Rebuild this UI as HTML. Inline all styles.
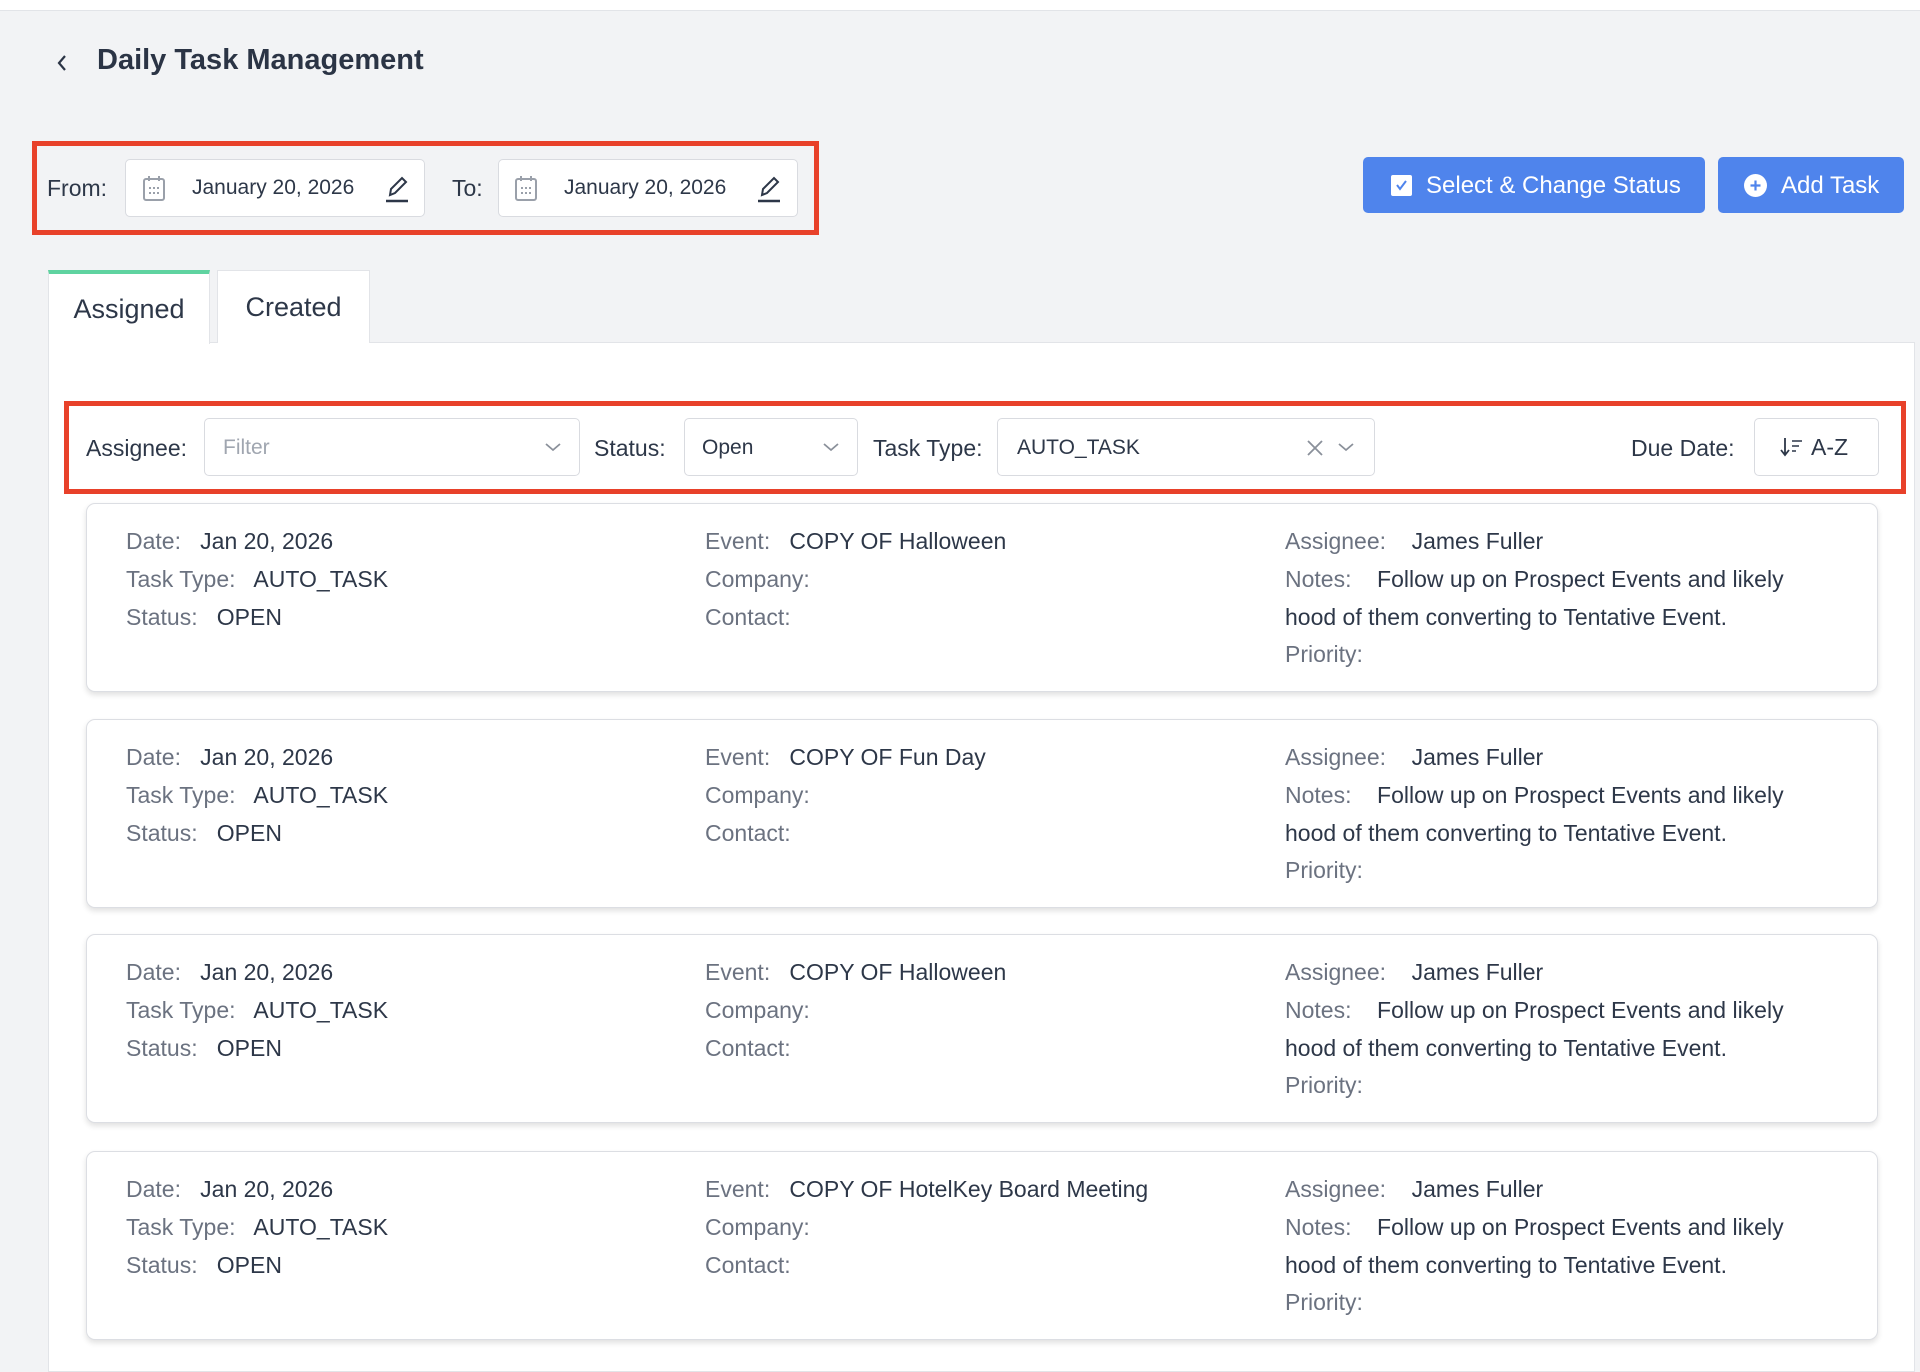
<!DOCTYPE html>
<html><head><meta charset="utf-8"><style>
*{box-sizing:border-box;margin:0;padding:0}
body{width:1920px;height:1360px;background:#f2f3f5;font-family:"Liberation Sans",sans-serif;color:#2d3748;position:relative;overflow:hidden}
.a{position:absolute}
.top{left:0;top:0;width:1920px;height:11px;background:#fff;border-bottom:1px solid #e2e4e8}
.title{left:97px;top:40px;font-size:29px;font-weight:bold;color:#2b3445;line-height:40px}
.red{border:5px solid #e8412a}
.lbl{font-size:23px;color:#2d3748;line-height:30px}
.box{background:#fff;border:1px solid #d9dbe0;border-radius:5px}
.btn{background:#4f84ec;border-radius:5px;color:#fff;font-size:24px;line-height:56px}
.card{left:86px;width:1792px;height:189px;background:#fff;border:1px solid #dcdee3;border-radius:9px;box-shadow:0 3px 6px rgba(0,0,0,.12)}
.row{position:absolute;font-size:23px;line-height:30px;white-space:nowrap}
.row .k{color:#6b7280}
.tab{top:270px;height:73px;background:#fff;border:1px solid #e2e4e8;border-bottom:none;font-size:27px;line-height:73px;text-align:center;color:#2d3748}
</style></head><body>
<div class="a top"></div>
<svg class="a" style="left:54px;top:52px" width="16" height="22" viewBox="0 0 16 22"><path d="M11 4 L5 11 L11 18" fill="none" stroke="#2b3445" stroke-width="2.2"/></svg>
<div class="a title">Daily Task Management</div>

<div class="a red" style="left:32px;top:141px;width:787px;height:94px"></div>
<div class="a lbl" style="left:47px;top:173px">From:</div>
<div class="a box" style="left:125px;top:159px;width:300px;height:58px"></div>
<svg class="a" style="left:142px;top:174px" width="24" height="28" viewBox="0 0 24 28"><rect x="2" y="5" width="20" height="21" rx="2" fill="none" stroke="#9aa0aa" stroke-width="2"/><line x1="7" y1="2" x2="7" y2="7" stroke="#9aa0aa" stroke-width="2"/><line x1="17" y1="2" x2="17" y2="7" stroke="#9aa0aa" stroke-width="2"/><g fill="#9aa0aa"><rect x="7" y="13" width="2" height="2"/><rect x="11" y="13" width="2" height="2"/><rect x="15" y="13" width="2" height="2"/><rect x="7" y="18" width="2" height="2"/><rect x="11" y="18" width="2" height="2"/><rect x="15" y="18" width="2" height="2"/></g></svg>
<div class="a" style="left:192px;top:173px;font-size:21px;line-height:30px">January 20, 2026</div>
<svg class="a" style="left:383px;top:174px" width="28" height="30" viewBox="0 0 28 30"><path d="M7 21 L8 15 L19 4 L23 8 L12 19 Z" fill="none" stroke="#2d3748" stroke-width="2"/><line x1="3" y1="27" x2="25" y2="27" stroke="#2d3748" stroke-width="2.4"/></svg>
<div class="a lbl" style="left:452px;top:173px">To:</div>
<div class="a box" style="left:498px;top:159px;width:300px;height:58px"></div>
<svg class="a" style="left:514px;top:174px" width="24" height="28" viewBox="0 0 24 28"><rect x="2" y="5" width="20" height="21" rx="2" fill="none" stroke="#9aa0aa" stroke-width="2"/><line x1="7" y1="2" x2="7" y2="7" stroke="#9aa0aa" stroke-width="2"/><line x1="17" y1="2" x2="17" y2="7" stroke="#9aa0aa" stroke-width="2"/><g fill="#9aa0aa"><rect x="7" y="13" width="2" height="2"/><rect x="11" y="13" width="2" height="2"/><rect x="15" y="13" width="2" height="2"/><rect x="7" y="18" width="2" height="2"/><rect x="11" y="18" width="2" height="2"/><rect x="15" y="18" width="2" height="2"/></g></svg>
<div class="a" style="left:564px;top:173px;font-size:21px;line-height:30px">January 20, 2026</div>
<svg class="a" style="left:755px;top:174px" width="28" height="30" viewBox="0 0 28 30"><path d="M7 21 L8 15 L19 4 L23 8 L12 19 Z" fill="none" stroke="#2d3748" stroke-width="2"/><line x1="3" y1="27" x2="25" y2="27" stroke="#2d3748" stroke-width="2.4"/></svg>

<div class="a btn" style="left:1363px;top:157px;width:342px;height:56px"></div>
<svg class="a" style="left:1391px;top:175px" width="21" height="21" viewBox="0 0 21 21"><rect width="21" height="21" rx="2" fill="#fff"/><path d="M6 10 L9 14 L15 6" fill="none" stroke="#4f84ec" stroke-width="2"/></svg>
<div class="a btn" style="left:1426px;top:158px;background:none">Select &amp; Change Status</div>
<div class="a btn" style="left:1718px;top:157px;width:186px;height:56px"></div>
<svg class="a" style="left:1744px;top:174px" width="23" height="23" viewBox="0 0 23 23"><circle cx="11.5" cy="11.5" r="11.5" fill="#fff"/><path d="M11.5 6.5v10M6.5 11.5h10" stroke="#4f84ec" stroke-width="2.2"/></svg>
<div class="a btn" style="left:1781px;top:158px;background:none">Add Task</div>

<div class="a" style="left:48px;top:342px;width:1867px;height:1030px;background:#fff;border:1px solid #e2e4e8"></div>
<div class="a tab" style="left:48px;width:162px;border-top:4px solid #5fd3a0;line-height:70px;height:74px">Assigned</div>
<div class="a tab" style="left:217px;width:153px;background:#fff">Created</div>

<div class="a red" style="left:64px;top:401px;width:1842px;height:93px"></div>
<div class="a lbl" style="left:86px;top:433px">Assignee:</div>
<div class="a box" style="left:204px;top:418px;width:376px;height:58px"></div>
<div class="a" style="left:223px;top:433px;font-size:21px;line-height:30px;color:#a0a6b0">Filter</div>
<svg class="a" style="left:544px;top:440px" width="18" height="14" viewBox="0 0 18 14"><path d="M2 4 L9 10 L16 4" fill="none" stroke="#8a909a" stroke-width="1.8"/></svg>
<div class="a lbl" style="left:594px;top:433px">Status:</div>
<div class="a box" style="left:684px;top:418px;width:174px;height:58px"></div>
<div class="a" style="left:702px;top:433px;font-size:21px;line-height:30px">Open</div>
<svg class="a" style="left:822px;top:440px" width="18" height="14" viewBox="0 0 18 14"><path d="M2 4 L9 10 L16 4" fill="none" stroke="#8a909a" stroke-width="1.8"/></svg>
<div class="a lbl" style="left:873px;top:433px">Task Type:</div>
<div class="a box" style="left:997px;top:418px;width:378px;height:58px"></div>
<div class="a" style="left:1017px;top:433px;font-size:21px;line-height:30px">AUTO_TASK</div>
<svg class="a" style="left:1305px;top:438px" width="20" height="20" viewBox="0 0 20 20"><path d="M3 3 L17 17 M17 3 L3 17" stroke="#8a909a" stroke-width="1.8"/></svg>
<svg class="a" style="left:1337px;top:440px" width="18" height="14" viewBox="0 0 18 14"><path d="M2 4 L9 10 L16 4" fill="none" stroke="#8a909a" stroke-width="1.8"/></svg>
<div class="a lbl" style="left:1631px;top:433px">Due Date:</div>
<div class="a box" style="left:1754px;top:418px;width:125px;height:58px"></div>
<svg class="a" style="left:1780px;top:436px" width="24" height="22" viewBox="0 0 24 22"><path d="M5 2 V18 M1 14 L5 19 L9 14" fill="none" stroke="#2d3748" stroke-width="1.8"/><path d="M12 5h10M12 10h7M12 15h4" stroke="#2d3748" stroke-width="1.6"/></svg>
<div class="a" style="left:1811px;top:432px;font-size:23px;line-height:30px">A-Z</div>

<div class="a card" style="top:503px">
<div class="row" style="left:39px;top:22px"><span class="k">Date:</span>&nbsp;&nbsp; Jan 20, 2026</div>
<div class="row" style="left:39px;top:60px"><span class="k">Task Type:</span>&nbsp;&nbsp; AUTO_TASK</div>
<div class="row" style="left:39px;top:98px"><span class="k">Status:</span>&nbsp;&nbsp; OPEN</div>
<div class="row" style="left:618px;top:22px"><span class="k">Event:</span>&nbsp;&nbsp; COPY OF Halloween</div>
<div class="row" style="left:618px;top:60px"><span class="k">Company:</span></div>
<div class="row" style="left:618px;top:98px"><span class="k">Contact:</span></div>
<div class="row" style="left:1198px;top:22px"><span class="k">Assignee:</span>&nbsp;&nbsp;&nbsp; James Fuller</div>
<div class="row" style="left:1198px;top:60px"><span class="k">Notes:</span>&nbsp;&nbsp;&nbsp; Follow up on Prospect Events and likely</div>
<div class="row" style="left:1198px;top:98px">hood of them converting to Tentative Event.</div>
<div class="row" style="left:1198px;top:135px"><span class="k">Priority:</span></div>
</div>
<div class="a card" style="top:719px">
<div class="row" style="left:39px;top:22px"><span class="k">Date:</span>&nbsp;&nbsp; Jan 20, 2026</div>
<div class="row" style="left:39px;top:60px"><span class="k">Task Type:</span>&nbsp;&nbsp; AUTO_TASK</div>
<div class="row" style="left:39px;top:98px"><span class="k">Status:</span>&nbsp;&nbsp; OPEN</div>
<div class="row" style="left:618px;top:22px"><span class="k">Event:</span>&nbsp;&nbsp; COPY OF Fun Day</div>
<div class="row" style="left:618px;top:60px"><span class="k">Company:</span></div>
<div class="row" style="left:618px;top:98px"><span class="k">Contact:</span></div>
<div class="row" style="left:1198px;top:22px"><span class="k">Assignee:</span>&nbsp;&nbsp;&nbsp; James Fuller</div>
<div class="row" style="left:1198px;top:60px"><span class="k">Notes:</span>&nbsp;&nbsp;&nbsp; Follow up on Prospect Events and likely</div>
<div class="row" style="left:1198px;top:98px">hood of them converting to Tentative Event.</div>
<div class="row" style="left:1198px;top:135px"><span class="k">Priority:</span></div>
</div>
<div class="a card" style="top:934px">
<div class="row" style="left:39px;top:22px"><span class="k">Date:</span>&nbsp;&nbsp; Jan 20, 2026</div>
<div class="row" style="left:39px;top:60px"><span class="k">Task Type:</span>&nbsp;&nbsp; AUTO_TASK</div>
<div class="row" style="left:39px;top:98px"><span class="k">Status:</span>&nbsp;&nbsp; OPEN</div>
<div class="row" style="left:618px;top:22px"><span class="k">Event:</span>&nbsp;&nbsp; COPY OF Halloween</div>
<div class="row" style="left:618px;top:60px"><span class="k">Company:</span></div>
<div class="row" style="left:618px;top:98px"><span class="k">Contact:</span></div>
<div class="row" style="left:1198px;top:22px"><span class="k">Assignee:</span>&nbsp;&nbsp;&nbsp; James Fuller</div>
<div class="row" style="left:1198px;top:60px"><span class="k">Notes:</span>&nbsp;&nbsp;&nbsp; Follow up on Prospect Events and likely</div>
<div class="row" style="left:1198px;top:98px">hood of them converting to Tentative Event.</div>
<div class="row" style="left:1198px;top:135px"><span class="k">Priority:</span></div>
</div>
<div class="a card" style="top:1151px">
<div class="row" style="left:39px;top:22px"><span class="k">Date:</span>&nbsp;&nbsp; Jan 20, 2026</div>
<div class="row" style="left:39px;top:60px"><span class="k">Task Type:</span>&nbsp;&nbsp; AUTO_TASK</div>
<div class="row" style="left:39px;top:98px"><span class="k">Status:</span>&nbsp;&nbsp; OPEN</div>
<div class="row" style="left:618px;top:22px"><span class="k">Event:</span>&nbsp;&nbsp; COPY OF HotelKey Board Meeting</div>
<div class="row" style="left:618px;top:60px"><span class="k">Company:</span></div>
<div class="row" style="left:618px;top:98px"><span class="k">Contact:</span></div>
<div class="row" style="left:1198px;top:22px"><span class="k">Assignee:</span>&nbsp;&nbsp;&nbsp; James Fuller</div>
<div class="row" style="left:1198px;top:60px"><span class="k">Notes:</span>&nbsp;&nbsp;&nbsp; Follow up on Prospect Events and likely</div>
<div class="row" style="left:1198px;top:98px">hood of them converting to Tentative Event.</div>
<div class="row" style="left:1198px;top:135px"><span class="k">Priority:</span></div>
</div>
</body></html>
